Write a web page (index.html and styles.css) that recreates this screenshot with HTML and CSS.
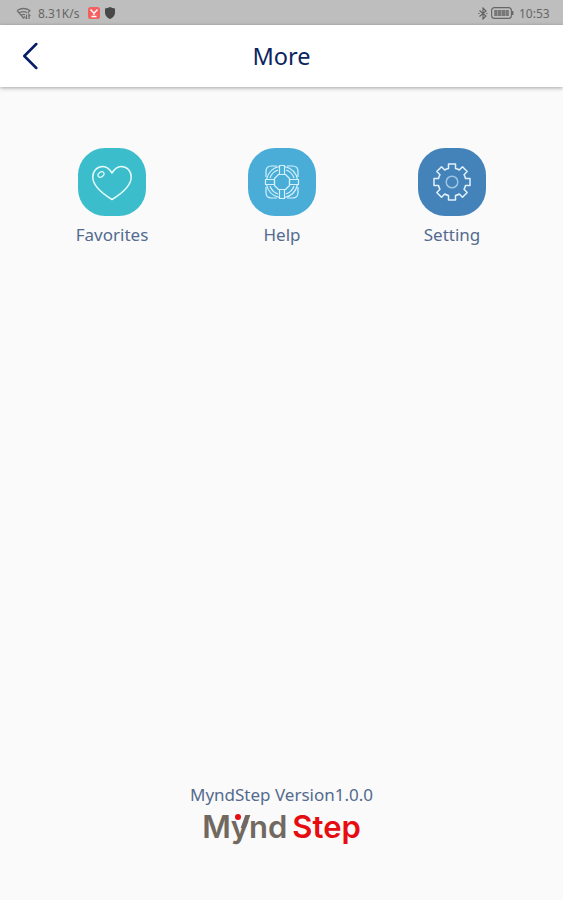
FILE: index.html
```html
<!DOCTYPE html>
<html lang="en">
<head>
  <meta charset="UTF-8" />
  <meta name="viewport" content="width=device-width, initial-scale=1.0"/>
  <title>More - MyndStep</title>
  <link rel="stylesheet" href="styles.css">
</head>
<body>

  <div class="status">
    <div class="status-left">
      <svg class="wifi" width="16" height="13" viewBox="0 0 16 13" fill="none" stroke="#707070" stroke-width="1.3">
        <path d="M1 3.5Q7.5-.5 14 3.5L12 5.8M1 3.5L7.5 11L9 9.5M3.5 5.8Q7.5 3.5 11 5.8M5.5 8Q7.5 6.8 9 7.8"/>
        <path d="M10.5 7.5v4.5M9.5 10.5l1 1.5M13 12V7.5l1.2 1.5"/>
      </svg>
      <span class="speed">8.31K/s</span>
      <svg class="app" width="12" height="12" viewBox="0 0 12 12">
        <rect width="12" height="12" rx="2.5" fill="#f4605f"/>
        <path d="M2.5 2.5L6 6.3L9.5 2.5M6 6v2M3.5 9.5h5" fill="none" stroke="#fff" stroke-width="1.4"/>
      </svg>
      <svg class="shield" width="10" height="12" viewBox="0 0 10 12">
        <path d="M5 0Q7.5 1.3 10 1.6V6Q9.5 10 5 12Q.5 10 0 6V1.6Q2.5 1.3 5 0Z" fill="#484848"/>
      </svg>
    </div>
    <div class="status-right">
      <svg class="bluetooth" width="10" height="13" viewBox="0 0 10 13" fill="none" stroke="#606060" stroke-width="1.1">
        <path d="M1.5 3.5L8 9L5 12V1L8 4L1.5 9.5M.3 6.5h1.2M8.3 6.5h1.2"/>
      </svg>
      <svg class="battery" width="23" height="12" viewBox="0 0 23 12">
        <rect x=".6" y=".6" width="19.8" height="10.8" rx="3" fill="none" stroke="#666" stroke-width="1.1"/>
        <path d="M3.2 3h14.6v6H3.2z" fill="#777"/>
        <path d="M6.5 3v6M10.5 3v6M14.5 3v6" stroke="#a0a0a0" stroke-width=".8"/>
        <path d="M21.7 4v4" stroke="#666" stroke-width="1.4"/>
      </svg>
      <span class="clock">10:53</span>
    </div>
  </div>

  <header class="header">
    <svg class="back" width="16" height="28" viewBox="0 0 16 28" fill="none" stroke="#051c68" stroke-width="2.5" stroke-linecap="round" stroke-linejoin="round">
      <path d="M14.3 2L2.3 14L14.3 26"/>
    </svg>
    <h1>More</h1>
  </header>

  <main class="menu">
    <a class="item">
      <span class="tile favorites">
        <svg width="42" height="42" viewBox="0 0 42 42" fill="none" stroke="#e4fbfc" stroke-width="1.5" stroke-linejoin="round">
          <path d="M21 12C18.5 8 15.5 5.5 12 5.5C6 5.5 1.8 10 1.8 16C1.8 25 12 33 21 38.5C30 33 40.2 25 40.2 16C40.2 10 36 5.5 30 5.5C26.5 5.5 23.5 8 21 12Z"/>
          <ellipse cx="10" cy="13.5" rx="3.3" ry="2.3" transform="rotate(-35 10 13.5)" stroke-width="1.2"/>
        </svg>
      </span>
      <span class="label">Favorites</span>
    </a>
    <a class="item">
      <span class="tile help">
        <svg width="36" height="36" viewBox="0 0 36 36" fill="none" stroke="#d5f1fd" stroke-width="1.2" stroke-linejoin="round">
          <path d="M14.5 10.5h7l4 4v7l-4 4h-7l-4-4v-7z"/>
          <g id="strap">
            <path d="M15.5 1.5h5v9h-5z"/>
            <path d="M15.5 2.5Q5 4.5 2.5 15.5M14 6Q8 8 6 14"/>
            <path d="M2 13V7.5Q2 2 7.5 2H13"/>
          </g>
          <use href="#strap" transform="rotate(90 18 18)"/>
          <use href="#strap" transform="rotate(180 18 18)"/>
          <use href="#strap" transform="rotate(270 18 18)"/>
        </svg>
      </span>
      <span class="label">Help</span>
    </a>
    <a class="item">
      <span class="tile setting">
        <svg width="40" height="40" viewBox="0 0 40 40" fill="none" stroke="#e1f0fb" stroke-width="1.5" stroke-linejoin="round">
          <path d="M16.5 2h7v4.5q2 .4 3.8 1.5l3.2-3.2l4.7 4.7L32 12.7q1.1 1.8 1.5 3.8H38v7h-4.5q-.4 2-1.5 3.8l3.2 3.2l-4.7 4.7L27.3 32q-1.8 1.1-3.8 1.5V38h-7v-4.5q-2-.4-3.8-1.5l-3.2 3.2l-4.7-4.7L8 27.3q-1.1-1.8-1.5-3.8H2v-7h4.500q.4-2 1.500-3.800L4.800 9.500l4.700-4.700L12.700 8q1.800-1.100 3.800-1.500z"/>
          <circle cx="20" cy="20" r="5.8" stroke="#9fc5e4"/>
        </svg>
      </span>
      <span class="label">Setting</span>
    </a>
  </main>

  <footer class="footer">
    <p class="version">MyndStep Version1.0.0</p>
    <div class="logo">
      <span class="mynd">M<span class="y">y</span>nd</span>
      <span class="step">Step</span>
    </div>
  </footer>

</body>
</html>
```

FILE: styles.css
```css
:root {
  --navy: #0b2461;
  --slate: #536b8e;
  --taupe: #716860;
  --red: #e60d12;
}

* {
  box-sizing: border-box;
}

body {
  margin: 0;
  height: 100vh;
  display: flex;
  flex-direction: column;
  background-color: #fafafa;
  font-family: "Noto Sans", sans-serif;
  overflow: hidden;
}

svg {
  display: block;
  flex: none;
}

.status {
  height: 25px;
  flex: none;
  padding: 1px 12px 0 16px;
  display: flex;
  justify-content: space-between;
  background-color: #bebebe;
  color: #666;
  font-size: 12px;
}

.status-left,
.status-right {
  display: flex;
  align-items: center;
}

.speed {
  width: 44px;
  margin-left: 6px;
  white-space: nowrap;
}

.app {
  margin-left: 6px;
}

.shield {
  margin-left: 5px;
}

.battery {
  margin-left: 3px;
}

.clock {
  width: 32px;
  margin-left: 5px;
}

.header {
  height: 62px;
  flex: none;
  padding: 0 22px;
  display: grid;
  grid-template-columns: 16px 1fr 16px;
  align-items: center;
  background-color: #fff;
  box-shadow: 0 1px 4px rgba(0, 0, 0, 0.35);
}

h1 {
  margin: 0;
  padding-bottom: 1px;
  color: var(--navy);
  font-size: 23.5px;
  font-weight: 400;
  line-height: 30px;
  text-align: center;
}

.menu {
  flex: 1;
  padding: 61px 26px 0 27px;
  display: grid;
  grid-template-columns: repeat(3, 170px);
  justify-content: center;
  align-items: start;
}

.item {
  display: flex;
  flex-direction: column;
  align-items: center;
}

.tile {
  width: 68px;
  height: 68px;
  border-radius: 27px;
  display: flex;
  align-items: center;
  justify-content: center;
}

.favorites {
  background-color: #3cbdcb;
}

.help {
  background-color: #49add8;
}

.setting {
  background-color: #4383b9;
}

.label {
  margin-top: 7px;
  color: var(--slate);
  font-size: 17px;
  line-height: 24px;
}

.footer {
  height: 117px;
  flex: none;
  display: flex;
  flex-direction: column;
  align-items: center;
}

.version {
  margin: 0;
  color: var(--slate);
  font-size: 17px;
  line-height: 24px;
}

.logo {
  display: flex;
  gap: 5px;
  font-family: Inter, sans-serif;
  font-size: 31px;
  font-weight: 600;
  line-height: 40px;
}

.mynd {
  color: var(--taupe);
}

.y {
  position: relative;
}

/* raised right arm of the y */
.y::before {
  content: "";
  position: absolute;
  right: 1.5px;
  top: 7px;
  width: 4.5px;
  height: 13px;
  background-color: var(--taupe);
  transform: skewX(-20deg);
}

.y::after {
  content: "";
  position: absolute;
  left: 4px;
  top: 6px;
  width: 6px;
  height: 6px;
  border-radius: 50%;
  background-color: var(--red);
}

.step {
  color: var(--red);
}
```
